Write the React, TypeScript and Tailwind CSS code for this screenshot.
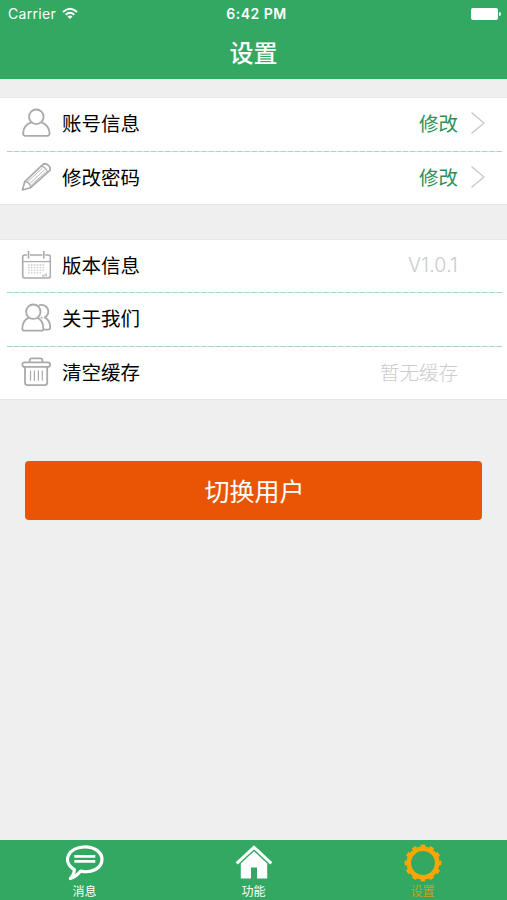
import type { ReactNode } from "react";

const UserIcon = () => (
  <svg className="h-[30px] w-[30px]" viewBox="0 0 30 30" fill="none" stroke="#aaaaaa" strokeWidth="1.8" strokeLinejoin="round">
    <circle cx="15.3" cy="8.8" r="7.3" />
    <path d="M10.3 14.4C5.8 16 2.3 20 2.1 25.3Q2.1 27.8 4.4 27.8H26.2Q28.6 27.8 28.6 25.3C28.3 20 24.8 16 20.3 14.4" />
  </svg>
);

const PencilIcon = () => (
  <svg className="h-[30px] w-[30px]" viewBox="0 0 30 30" fill="none" stroke="#aaaaaa" strokeWidth="1.7" strokeLinejoin="round" strokeLinecap="round">
    <path d="M1.4 28L3.8 19.6L21.7 2.7C24.8-.2 31.4 5.4 28.3 8.9L9.6 25.7Z" />
    <path d="M3.8 19.6C7 19.8 9.4 22.2 9.6 25.7M20.4 4.1C23 4.8 25.7 7.2 26.5 10.1M1.9 26.8L3.1 27.6" strokeWidth="1.2" />
    <path d="M6.2 20.2L21.2 6.2M8 22.3L23.2 8M9.3 24.2L24.8 9.8" strokeWidth=".8" />
  </svg>
);

const CalendarIcon = () => (
  <svg className="h-[30px] w-[30px]" viewBox="0 0 30 30" fill="none" stroke="#aaaaaa" strokeWidth="1.6">
    <path d="M6 5H3.7Q1.7 5 1.7 7V25.8Q1.7 28 3.7 28H27.3Q29.4 28 29.4 25.8V7Q29.4 5 27.3 5H24.2M9 5H21.3M7.5 1V8.4M22.8 1V8.4" />
    <path d="M1.7 11.6H29.4" strokeWidth="1.2" />
    <path d="M7 15H24M7 17.6H24M7 20.2H24M7 22.8H20" strokeWidth="1.3" strokeDasharray="1.6 1.3" stroke="#cccccc" />
    <path d="M21 26L25.6 23.8V26Z" strokeWidth=".7" />
  </svg>
);

const UsersIcon = () => (
  <svg className="h-[30px] w-[30px]" viewBox="0 0 30 30" fill="none" stroke="#aaaaaa" strokeWidth="1.8" strokeLinejoin="round">
    <circle cx="12.3" cy="8.7" r="7.2" />
    <path d="M8 14.6C4 16.2 1.4 20 1.3 25.4Q1.3 27.7 3.3 27.7H20.3Q22.5 27.7 22.4 25.4C22.2 20 20 16.2 16.2 14.6" />
    <path d="M17.6 2.5C22.4.4 27.3 4.2 27.3 8.6C27.3 11.1 25.8 13.2 23.7 14.4C27.4 16.4 29.2 20.6 29.2 24.8Q29.2 26.6 26.9 26.6H22.6" />
    <path d="M19.7 14L21.6 15.2" strokeWidth="1.2" />
  </svg>
);

const TrashIcon = () => (
  <svg className="h-[30px] w-[30px]" viewBox="0 0 30 30" fill="none" stroke="#aaaaaa" strokeWidth="1.8" strokeLinejoin="round">
    <rect x="1.4" y="5.3" width="27.7" height="4.6" rx="2.2" />
    <path d="M8.7 5.2V3.4Q8.7 1.4 10.7 1.4H19.4Q21.4 1.4 21.4 3.4V5.2M4 9.8V25.5Q4 28.2 6.5 28.2H23.7Q26.2 28.2 26.2 25.5V9.8" />
    <path d="M9.5 13.5V23.8M13.4 13.5V23.8M17.4 13.5V23.8M21.3 13.5V23.8" strokeWidth="1.2" />
  </svg>
);

const Chevron = () => (
  <svg className="ml-[13px] h-6 w-[14px]" viewBox="0 0 14 24" fill="none" stroke="#c9c9c9" strokeWidth="1.4">
    <path d="M.5 1.5L13 12L.5 22.5" />
  </svg>
);

const Divider = () => (
  <svg className="ml-[7px] block h-px w-[496px]" viewBox="0 0 496 1">
    <path d="M0 .5H496" stroke="#d3ebe5" />
    <path d="M0 .5H496" stroke="#a5d4c7" strokeDasharray="5 2.2" />
  </svg>
);

interface RowProps {
  icon: ReactNode;
  label: string;
  value?: ReactNode;
  action?: boolean;
  tall?: boolean;
}

function Row({ icon, label, value, action, tall }: RowProps) {
  return (
    <div className={`flex items-center pl-[21px] text-[19.5px] leading-none ${tall ? "h-[53px] pb-1" : "h-[52px] pb-[2px]"}`}>
      {icon}
      <span className="ml-[11px] flex-1 text-black">{label}</span>
      {value && (
        <span className={action ? "text-[#2d9059]" : "mr-[49px] font-light text-[#cbcbcb]"}>{value}</span>
      )}
      {action && <div className="mr-[22px] flex"><Chevron /></div>}
    </div>
  );
}

const ChatIcon = () => (
  <svg className="h-9 w-[38px]" viewBox="0 0 38 36" fill="none" stroke="white">
    <path d="M8.3 24.6C-5.2 16 3.2 1.8 19 1.8C28.5 1.8 36 7.3 36 14.2C36 23.3 25.5 28.6 14.7 26.1Q10.5 31.5 4.3 33.6Q8.3 29.5 8.3 24.6Z" strokeWidth="3.2" strokeLinejoin="round" />
    <path d="M8.3 11.4H29.3M8.3 16.3H29.3" strokeWidth="2.8" />
  </svg>
);

const HomeIcon = () => (
  <svg className="h-9 w-[38px]" viewBox="0 0 38 36" fill="white">
    <path d="M1.7 18.3L19 2.3L36.3 18.3" fill="none" stroke="white" strokeWidth="3" />
    <path d="M19 6.3L32.2 18.6V33.4H22V22.4H16V33.4H5.8V18.6Z" />
  </svg>
);

const GearIcon = () => (
  <svg className="h-[38px] w-[38px]" viewBox="0 0 38 38" fill="none" stroke="#fba505">
    <circle cx="19" cy="19" r="14.2" strokeWidth="4.6" />
    <circle cx="19" cy="19" r="16.8" strokeWidth="3.2" pathLength="168" strokeDasharray="7.4 6.6" strokeDashoffset="3.7" />
  </svg>
);

function Tab({ icon, label, active }: { icon: ReactNode; label: string; active?: boolean }) {
  return (
    <div className={`flex flex-1 flex-col items-center text-[12px] leading-none ${active ? "text-[#d29a1f]" : "text-white"}`}>
      <div className="flex h-[45px] items-center">{icon}</div>
      <span>{label}</span>
    </div>
  );
}

export default function App() {
  return (
    <div className="flex h-[900px] w-[507px] flex-col overflow-hidden bg-[#efefef] font-['Noto_Sans_CJK_SC',sans-serif]">
      <header className="h-[79px] bg-[#32a862] text-white">
        <div className="flex h-7 items-center font-['Inter',sans-serif] leading-none">
          <div className="flex flex-1 items-center gap-[6px] pl-[8px]">
            <span className="text-[14px] tracking-[.3px]">Carrier</span>
            <svg className="mb-px h-[13px] w-4" viewBox="0 0 16 13" fill="none" stroke="white" strokeWidth="2">
              <path d="M1 5Q8-1.5 15 5M3.7 7.8Q8 3.8 12.3 7.8" />
              <path d="M5.5 9.4Q8 7.4 10.5 9.4L8 12Z" fill="white" stroke="none" />
            </svg>
          </div>
          <span className="ml-[4px] text-[14px] font-semibold tracking-[.5px]">6:42 PM</span>
          <div className="flex flex-1 items-center justify-end gap-px pr-[6px]">
            <div className="h-3 w-[27px] rounded-[2px] bg-white" />
            <div className="h-1 w-[2px] rounded-r-full bg-white" />
          </div>
        </div>
        <h1 className="pt-[12px] text-center text-[24px] leading-none font-medium">设置</h1>
      </header>

      <section className="mt-[18px] border-y border-[#e7e7e7] bg-white">
        <Row icon={<UserIcon />} label="账号信息" value="修改" action tall />
        <Divider />
        <Row icon={<PencilIcon />} label="修改密码" value="修改" action />
      </section>

      <section className="mt-[34px] border-y border-[#e7e7e7] bg-white">
        <Row
          icon={<CalendarIcon />}
          label="版本信息"
          value={<span className="font-['Inter',sans-serif] text-[19.5px] tracking-[.2px]">V1.0.1</span>}
        />
        <Divider />
        <Row icon={<UsersIcon />} label="关于我们" tall />
        <Divider />
        <Row icon={<TrashIcon />} label="清空缓存" value="暂无缓存" />
      </section>

      <button className="mx-[25px] mt-[61px] h-[59px] rounded-[4px] bg-[#e95504] pl-[2px] text-[25px] leading-none text-white">切换用户</button>

      <nav className="mt-auto flex h-[60px] bg-[#32a862]">
        <Tab icon={<ChatIcon />} label="消息" />
        <Tab icon={<HomeIcon />} label="功能" />
        <Tab icon={<GearIcon />} label="设置" active />
      </nav>
    </div>
  );
}
